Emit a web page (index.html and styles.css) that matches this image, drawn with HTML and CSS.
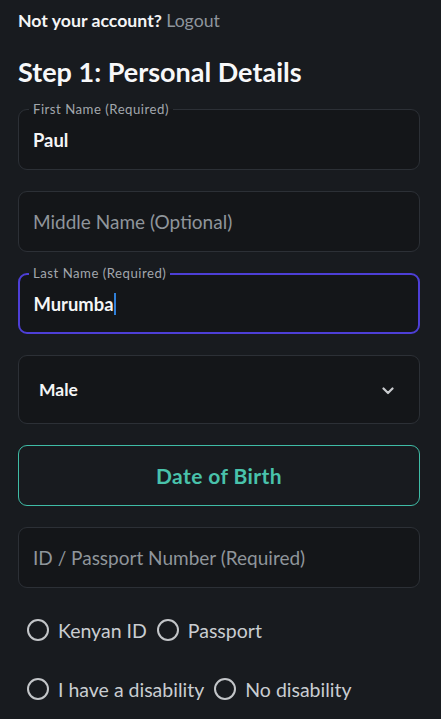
FILE: index.html
```html
<!DOCTYPE html>
<html>
<head>
<meta charset="utf-8">
<link rel="stylesheet" href="styles.css">
</head>
<body>
<div class="page">
  <p class="account">Not your account? <a class="logout">Logout</a></p>
  <h1 class="title">Step 1: Personal Details</h1>
  <form class="form">
    <div class="field">
      <span class="label">First Name (Required)</span>
      <span class="value">Paul</span>
    </div>
    <div class="field">
      <span class="placeholder">Middle Name (Optional)</span>
    </div>
    <div class="field focused">
      <span class="label">Last Name (Required)</span>
      <span class="value">Murumba<span class="caret"></span></span>
    </div>
    <div class="field select">
      <span class="value strong">Male</span>
      <svg class="chevron" width="12" height="8" viewBox="0 0 12 8"><path d="M1.5 1.5 L6 6 L10.5 1.5" fill="none" stroke="#c9cbce" stroke-width="2.2" stroke-linecap="round" stroke-linejoin="round"/></svg>
    </div>
    <div class="dob">Date of Birth</div>
    <div class="field">
      <span class="placeholder">ID / Passport Number (Required)</span>
    </div>
    <div class="radio-group">
      <div class="radios">
        <label class="radio"><span class="circle"></span>Kenyan ID</label>
        <label class="radio"><span class="circle"></span>Passport</label>
      </div>
      <div class="radios">
        <label class="radio"><span class="circle"></span>I have a disability</label>
        <label class="radio"><span class="circle"></span>No disability</label>
      </div>
    </div>
  </form>
</div>
</body>
</html>
```

FILE: styles.css
```css
html, body {
  margin: 0;
  padding: 0;
  background: #181b1f;
}
body {
  font-family: "Lato", "Noto Sans", sans-serif;
  color: #f2f3f4;
}
.page {
  padding: 10px 21px 0 18px;
}
.account {
  margin: 0;
  font-size: 17.7px;
  line-height: 22px;
  font-weight: 700;
  color: #f4f5f6;
}
.logout {
  color: #8e959c;
  font-weight: 400;
}
.title {
  margin: 24px 0 0;
  font-size: 27px;
  line-height: 32px;
  font-weight: 700;
  color: #f7f8f9;
}
.form {
  display: flex;
  flex-direction: column;
  gap: 21px;
  margin-top: 21px;
}
.field {
  position: relative;
  height: 61px;
  box-sizing: border-box;
  border: 1.5px solid #2c3036;
  border-radius: 9px;
  background: #141619;
  display: flex;
  align-items: center;
  padding: 0 14px;
}
.field.focused {
  border: 2px solid #4d3fd6;
  padding: 0 13.5px;
}
.label {
  position: absolute;
  top: -9px;
  left: 10px;
  padding: 0 4px;
  font-size: 13.2px;
  letter-spacing: 0.5px;
  line-height: 16px;
  color: #a2a7ad;
  background: linear-gradient(#181b1f 50%, #141619 50%);
}
.field.focused .label {
  left: 9px;
  top: -10px;
}
.value {
  font-size: 18.4px;
  font-weight: 700;
  color: #f4f5f6;
  display: flex;
  align-items: center;
}
.placeholder {
  font-size: 19px;
  color: #8f959b;
}
.caret {
  display: inline-block;
  width: 2px;
  height: 22px;
  background: #2f7fd8;
  margin-left: 1px;
}
.field.select {
  height: 69px;
  padding: 0 25px 0 20px;
  justify-content: space-between;
}
.field.select .value {
  font-size: 17.5px;
}
.chevron {
  margin-top: 3px;
}
.dob {
  height: 61px;
  box-sizing: border-box;
  border: 1.5px solid #3fbca6;
  border-radius: 9px;
  display: flex;
  align-items: center;
  justify-content: center;
  font-size: 21px;
  letter-spacing: 0.4px;
  font-weight: 700;
  color: #49c2ab;
}
.radio-group {
  display: flex;
  flex-direction: column;
  gap: 19px;
  margin-top: 1px;
}
.radios {
  display: flex;
  align-items: center;
  gap: 10px;
  padding-left: 9px;
  height: 40px;
}
.radio {
  display: flex;
  align-items: center;
  gap: 9px;
  font-size: 19.5px;
  color: #c9cdd1;
}
.circle {
  width: 22px;
  height: 22px;
  box-sizing: border-box;
  border: 2.5px solid #c3c6c9;
  border-radius: 50%;
}
```
